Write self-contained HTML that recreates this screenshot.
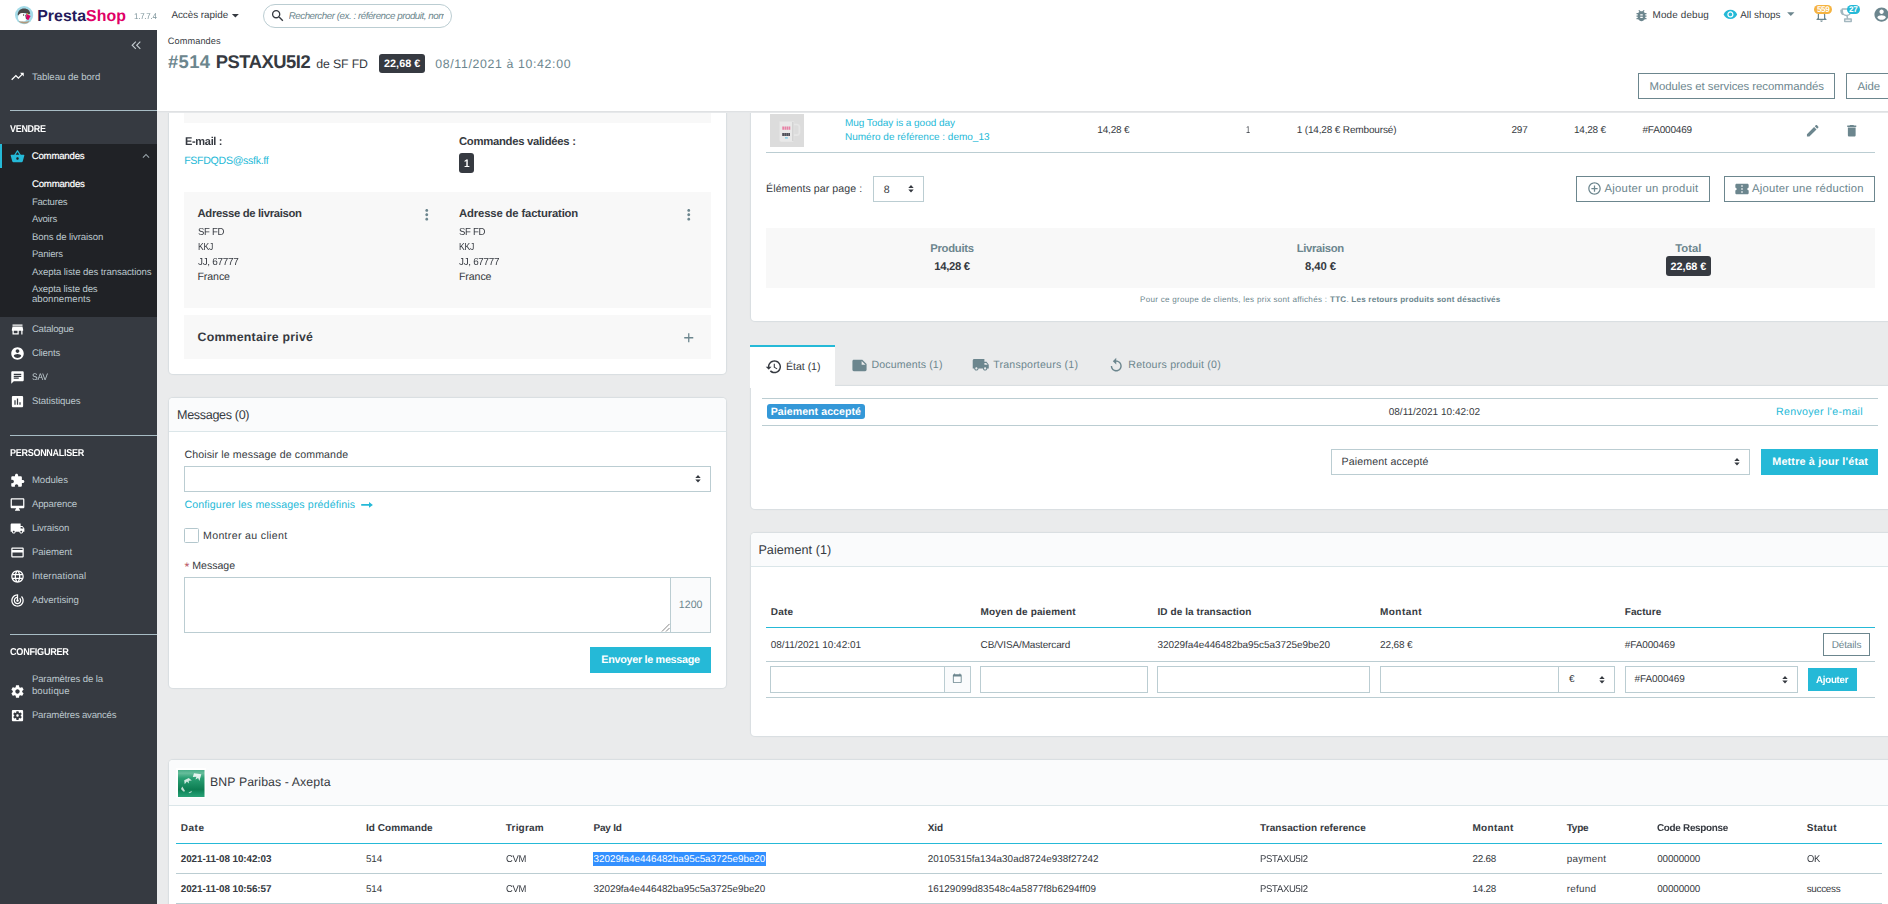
<!DOCTYPE html>
<html lang="fr">
<head>
<meta charset="utf-8">
<title>Commandes • PrestaShop</title>
<style>
*{box-sizing:border-box;margin:0;padding:0}
html,body{width:1888px;height:904px;overflow:hidden;background:#eaebec;font-family:"Liberation Sans",sans-serif;color:#363a41;font-size:11px;text-rendering:geometricPrecision}
.a{position:absolute}
.t{position:absolute;white-space:nowrap}
svg{position:absolute;display:block;overflow:visible}
</style>
</head>
<body>
<!-- main content -->
<div id="main" class="a" style="left:0;top:0;width:1888px;height:904px;overflow:hidden">
<div class="a" style="left:169px;top:80px;width:557px;height:294px;background:#fff;border-radius:4px;box-shadow:0 0 0 1px rgba(187,205,210,.25),0 0 3px rgba(0,0,0,.06)"></div>
<div class="a" style="left:184px;top:100px;width:527px;height:23px;background:#f8f8f8"></div>
<div class="t" style="left:184.5px;top:135px;font-size:11.3px;line-height:14px;height:14px;letter-spacing:-0.34px;transform:scaleX(0.976);transform-origin:0 50%;font-weight:bold">E-mail :</div>
<div class="t" style="left:459px;top:135px;font-size:11.3px;line-height:14px;height:14px;letter-spacing:-0.29px;font-weight:bold">Commandes validées :</div>
<div class="t" style="left:184.2px;top:154px;font-size:10.6px;line-height:14px;height:14px;letter-spacing:-0.31px;color:#25b9d7">FSFDQDS@ssfk.ff</div>
<div class="a" style="left:459px;top:153px;width:15px;height:20px;background:#363a41;border-radius:3px"></div>
<div class="t" style="left:463.7px;top:157px;font-size:10.8px;line-height:14px;height:14px;letter-spacing:-0.32px;transform:scaleX(0.932);transform-origin:0 50%;font-weight:bold;color:#fff">1</div>
<div class="a" style="left:184px;top:192px;width:527px;height:116px;background:#f8f8f8"></div>
<div class="t" style="left:197.5px;top:207px;font-size:11.3px;line-height:14px;height:14px;letter-spacing:-0.32px;font-weight:bold">Adresse de livraison</div>
<div class="t" style="left:459px;top:207px;font-size:11.3px;line-height:14px;height:14px;letter-spacing:-0.15px;font-weight:bold">Adresse de facturation</div>
<svg viewBox="0 0 24 24" style="left:418.45px;top:206.25px;width:17.5px;height:17.5px;fill:#6c868e"><path d="M12 8c1.1 0 2-.9 2-2s-.9-2-2-2-2 .9-2 2 .9 2 2 2zm0 2c-1.1 0-2 .9-2 2s.9 2 2 2 2-.9 2-2-.9-2-2-2zm0 6c-1.1 0-2 .9-2 2s.9 2 2 2 2-.9 2-2-.9-2-2-2z"/></svg>
<svg viewBox="0 0 24 24" style="left:679.65px;top:206.25px;width:17.5px;height:17.5px;fill:#6c868e"><path d="M12 8c1.1 0 2-.9 2-2s-.9-2-2-2-2 .9-2 2 .9 2 2 2zm0 2c-1.1 0-2 .9-2 2s.9 2 2 2 2-.9 2-2-.9-2-2-2zm0 6c-1.1 0-2 .9-2 2s.9 2 2 2 2-.9 2-2-.9-2-2-2z"/></svg>
<div class="t" style="left:197.5px;top:226px;font-size:10.2px;line-height:13px;height:13px;letter-spacing:-0.31px;transform:scaleX(0.938);transform-origin:0 50%">SF FD</div>
<div class="t" style="left:197.5px;top:241px;font-size:10.2px;line-height:13px;height:13px;letter-spacing:-0.31px;transform:scaleX(0.846);transform-origin:0 50%">KKJ</div>
<div class="t" style="left:197.5px;top:256px;font-size:10.2px;line-height:13px;height:13px;letter-spacing:-0.31px;transform:scaleX(0.976);transform-origin:0 50%">JJ, 67777</div>
<div class="t" style="left:197.5px;top:270px;font-size:10.6px;line-height:14px;height:14px;letter-spacing:-0.1px">France</div>
<div class="t" style="left:459px;top:226px;font-size:10.2px;line-height:13px;height:13px;letter-spacing:-0.31px;transform:scaleX(0.942);transform-origin:0 50%">SF FD</div>
<div class="t" style="left:459px;top:241px;font-size:10.2px;line-height:13px;height:13px;letter-spacing:-0.31px;transform:scaleX(0.846);transform-origin:0 50%">KKJ</div>
<div class="t" style="left:459px;top:256px;font-size:10.2px;line-height:13px;height:13px;letter-spacing:-0.31px;transform:scaleX(0.969);transform-origin:0 50%">JJ, 67777</div>
<div class="t" style="left:459px;top:270px;font-size:10.6px;line-height:14px;height:14px;letter-spacing:-0.1px">France</div>
<div class="a" style="left:184px;top:315px;width:527px;height:43.7px;background:#f8f8f8"></div>
<div class="t" style="left:197.5px;top:329px;font-size:12.3px;line-height:16px;height:16px;letter-spacing:0.25px;font-weight:bold">Commentaire privé</div>
<svg viewBox="0 0 24 24" style="left:680.75px;top:330.25px;width:15.5px;height:15.5px;fill:#6c868e"><path d="M19 13h-6v6h-2v-6H5v-2h6V5h2v6h6v2z"/></svg>
<div class="a" style="left:169px;top:398px;width:557px;height:290px;background:#fff;border-radius:4px;box-shadow:0 0 0 1px rgba(187,205,210,.25),0 0 3px rgba(0,0,0,.06)"></div>
<div class="a" style="left:169px;top:398px;width:557px;height:33px;background:#fafbfc;border-radius:4px 4px 0 0"></div>
<div class="a" style="left:169px;top:431px;width:557px;height:1px;background:#dbe6e9"></div>
<div class="t" style="left:177px;top:407px;font-size:12.6px;line-height:16px;height:16px;letter-spacing:-0.34px">Messages (0)</div>
<div class="t" style="left:184.4px;top:448px;font-size:10.6px;line-height:14px;height:14px;letter-spacing:0.12px">Choisir le message de commande</div>
<div class="a" style="left:184px;top:466px;width:527px;height:26px;background:#fff;border:1px solid #bbcdd2"></div>
<svg viewBox="0 0 8 10" style="left:694.7px;top:475.25px;width:6px;height:7.5px;fill:#363a41"><path d="M4 0L7.6 4H.4zM4 10L.4 6h7.2z"/></svg>
<div class="t" style="left:184.4px;top:498px;font-size:10.6px;line-height:14px;height:14px;letter-spacing:0.14px;color:#25b9d7">Configurer les messages prédéfinis</div>
<svg viewBox="360 498 14 14" style="left:360px;top:498px;width:14px;height:14px;fill:#25b9d7"><path d="M361.200 504.100h7.800v-2.100l3.900 2.900-3.900 2.900v-2.100h-7.800z"/></svg>
<div class="a" style="left:184px;top:528px;width:15px;height:15px;background:#fff;border:1px solid #b3c7cd;border-radius:1.500px"></div>
<div class="t" style="left:203px;top:529px;font-size:10.6px;line-height:14px;height:14px;letter-spacing:0.33px">Montrer au client</div>
<div class="t" style="left:184.4px;top:559px;font-size:10.6px;line-height:14px;height:14px;letter-spacing:-0.01px"><span style="color:#b8535f;font-size:12.500px;line-height:0;position:relative;top:1.500px">*</span> Message</div>
<div class="a" style="left:184px;top:577px;width:487px;height:56px;background:#fff;border:1px solid #bbcdd2"></div>
<div class="a" style="left:670px;top:577px;width:41px;height:56px;background:#fafbfc;border:1px solid #bbcdd2"></div>
<svg viewBox="0 0 10 10" style="left:660.500px;top:622.500px;width:9px;height:9px;fill:none;stroke:#6b6b6b;stroke-width:.9"><path d="M9.500 1L1 9.500M9.500 5.500L5.500 9.500"/></svg>
<div class="t" style="left:678.8px;top:598px;font-size:10.6px;line-height:14px;height:14px;letter-spacing:0.04px;color:#6c868e">1200</div>
<div class="a" style="left:590px;top:647px;width:121px;height:26px;background:#25b9d7"></div>
<div class="t" style="left:601.3px;top:653px;font-size:10.8px;line-height:14px;height:14px;letter-spacing:-0.3px;font-weight:bold;color:#fff">Envoyer le message</div>
<div class="a" style="left:751px;top:80px;width:1149px;height:240.5px;background:#fff;border-radius:4px;box-shadow:0 0 0 1px rgba(187,205,210,.25),0 0 3px rgba(0,0,0,.06)"></div>
<svg viewBox="770 114 34 33" style="left:770px;top:114px;width:34px;height:33px">
<defs><filter id="bl"><feGaussianBlur stdDeviation=".45"/></filter></defs>
<rect x="770" y="114" width="34" height="33" fill="#dcdcdc"/>
<g filter="url(#bl)">
<path d="M794 124.500h2.800a2.600 2.600 0 0 1 2.600 2.600v5.500a2.600 2.600 0 0 1-2.600 2.600H794" fill="none" stroke="#e6e6e6" stroke-width="1.700"/>
<path d="M779.500 121.500h14.600v18.500a1.800 1.800 0 0 1-1.800 1.800h-11a1.800 1.800 0 0 1-1.800-1.800z" fill="#e9e9e9"/>
<rect x="792" y="122" width="1.600" height="19" fill="#d3d3d3"/>
<path d="M782.300 128.100h8" stroke="#e8709a" stroke-width="3.400" stroke-dasharray="1.700 .45" opacity=".85" fill="none"/>
<path d="M782.300 134.600h8" stroke="#2e2e38" stroke-width="3" stroke-dasharray="1.600 .4" opacity=".9" fill="none"/>
<rect x="785" y="137" width="2.800" height="1.700" fill="#8fd0e6"/>
</g>
</svg>
<div class="t" style="left:845px;top:117px;font-size:10px;line-height:13px;height:13px;letter-spacing:-0.05px;color:#25b9d7">Mug Today is a good day</div>
<div class="t" style="left:845px;top:131px;font-size:10px;line-height:13px;height:13px;color:#25b9d7">Numéro de référence : demo_13</div>
<div class="t" style="left:1097.3px;top:124px;font-size:10px;line-height:13px;height:13px;letter-spacing:-0.18px">14,28 €</div>
<div class="t" style="left:1245.9px;top:124px;font-size:10px;line-height:13px;height:13px;letter-spacing:-0.3px;transform:scaleX(0.737);transform-origin:0 50%">1</div>
<div class="t" style="left:1296.7px;top:124px;font-size:10px;line-height:13px;height:13px;letter-spacing:-0.15px">1 (14,28 € Remboursé)</div>
<div class="t" style="left:1511.5px;top:124px;font-size:10px;line-height:13px;height:13px;letter-spacing:-0.24px">297</div>
<div class="t" style="left:1574px;top:124px;font-size:10px;line-height:13px;height:13px;letter-spacing:-0.23px">14,28 €</div>
<div class="t" style="left:1642.5px;top:124px;font-size:10px;line-height:13px;height:13px;letter-spacing:-0.19px">#FA000469</div>
<svg viewBox="0 0 24 24" style="left:1804.75px;top:122.75px;width:15.5px;height:15.5px;fill:#6c868e"><path d="M3 17.25V21h3.75L17.81 9.94l-3.75-3.75L3 17.25zM20.71 7.04c.39-.39.39-1.02 0-1.41l-2.34-2.34c-.39-.39-1.02-.39-1.41 0l-1.83 1.83 3.75 3.75 1.83-1.83z"/></svg>
<svg viewBox="0 0 24 24" style="left:1844.25px;top:122.55px;width:15.5px;height:15.5px;fill:#6c868e"><path d="M6 19c0 1.1.9 2 2 2h8c1.1 0 2-.9 2-2V7H6v12zM19 4h-3.5l-1-1h-5l-1 1H5v2h14V4z"/></svg>
<div class="a" style="left:766px;top:152px;width:1109px;height:1px;background:#bbcdd2"></div>
<div class="t" style="left:766.1px;top:182px;font-size:10.6px;line-height:14px;height:14px;letter-spacing:0.07px">Éléments par page :</div>
<div class="a" style="left:873px;top:176px;width:51px;height:26px;background:#fff;border:1px solid #bbcdd2"></div>
<div class="t" style="left:883.7px;top:183px;font-size:10.6px;line-height:14px;height:14px;letter-spacing:-0.3px">8</div>
<svg viewBox="0 0 8 10" style="left:908px;top:185.25px;width:6px;height:7.5px;fill:#363a41"><path d="M4 0L7.6 4H.4zM4 10L.4 6h7.2z"/></svg>
<div class="a" style="left:1576px;top:176px;width:134px;height:26px;background:#fff;border:1px solid #6c868e"></div>
<svg viewBox="0 0 24 24" style="left:1586.5px;top:180.7px;width:15px;height:15px;fill:#6c868e"><path d="M13 7h-2v4H7v2h4v4h2v-4h4v-2h-4V7zm-1-5C6.48 2 2 6.48 2 12s4.48 10 10 10 10-4.48 10-10S17.52 2 12 2zm0 18c-4.41 0-8-3.59-8-8s3.59-8 8-8 8 3.59 8 8-3.59 8-8 8z"/></svg>
<div class="t" style="left:1604.5px;top:182px;font-size:11.3px;line-height:14px;height:14px;letter-spacing:0.26px;color:#6c868e">Ajouter un produit</div>
<div class="a" style="left:1724px;top:176px;width:151px;height:26px;background:#fff;border:1px solid #6c868e"></div>
<svg viewBox="0 0 24 24" style="left:1734px;top:180.5px;width:16px;height:16px;fill:#6c868e"><path d="M22 10V6c0-1.11-.9-2-2-2H4c-1.1 0-1.99.89-1.99 2v4c1.1 0 1.99.9 1.99 2s-.89 2-2 2v4c0 1.1.9 2 2 2h16c1.1 0 2-.9 2-2v-4c-1.1 0-2-.9-2-2s.9-2 2-2zm-9 7.5h-2v-2h2v2zm0-4.5h-2v-2h2v2zm0-4.5h-2v-2h2v2z"/></svg>
<div class="t" style="left:1752px;top:182px;font-size:11.3px;line-height:14px;height:14px;letter-spacing:0.21px;color:#6c868e">Ajouter une réduction</div>
<div class="a" style="left:766px;top:228px;width:1109px;height:59.5px;background:#f8f8f8"></div>
<div class="t" style="left:930.2px;top:242px;font-size:11.3px;line-height:14px;height:14px;letter-spacing:-0.28px;font-weight:bold;color:#6c868e">Produits</div>
<div class="t" style="left:934.2px;top:260px;font-size:11.3px;line-height:14px;height:14px;letter-spacing:-0.3px;font-weight:bold">14,28 €</div>
<div class="t" style="left:1296.7px;top:242px;font-size:11.3px;line-height:14px;height:14px;letter-spacing:-0.33px;font-weight:bold;color:#6c868e">Livraison</div>
<div class="t" style="left:1305px;top:260px;font-size:11.3px;line-height:14px;height:14px;letter-spacing:-0.08px;font-weight:bold">8,40 €</div>
<div class="t" style="left:1675.3px;top:242px;font-size:11.3px;line-height:14px;height:14px;letter-spacing:-0.04px;font-weight:bold;color:#6c868e">Total</div>
<div class="a" style="left:1666px;top:256px;width:45px;height:20px;background:#363a41;border-radius:3px"></div>
<div class="t" style="left:1670.5px;top:260px;font-size:10.8px;line-height:14px;height:14px;letter-spacing:-0.04px;font-weight:bold;color:#fff">22,68 €</div>
<div class="t" style="left:1140px;top:294px;font-size:8.1px;line-height:11px;height:11px;letter-spacing:0.26px;color:#6c868e">Pour ce groupe de clients, les prix sont affichés :</div>
<div class="t" style="left:1330px;top:294px;font-size:8.1px;line-height:11px;height:11px;letter-spacing:0.21px;font-weight:bold;color:#6c868e">TTC<span style="font-weight:normal">.</span> Les retours produits sont désactivés</div>
<div class="a" style="left:751px;top:386px;width:1149px;height:122.5px;background:#fff;border-radius:4px;box-shadow:0 0 0 1px rgba(187,205,210,.25),0 0 3px rgba(0,0,0,.06);border-radius:0 0 4px 4px"></div>
<div class="a" style="left:750px;top:345px;width:85px;height:43px;background:#fff"></div>
<div class="a" style="left:750px;top:345px;width:85px;height:2px;background:#25b9d7"></div>
<svg viewBox="0 0 24 24" style="left:764.95px;top:358.05px;width:17.5px;height:17.5px;fill:#363a41"><path d="M13 3c-4.97 0-9 4.03-9 9H1l3.89 3.89.07.14L9 12H6c0-3.87 3.13-7 7-7s7 3.13 7 7-3.13 7-7 7c-1.93 0-3.68-.79-4.94-2.06l-1.42 1.42C8.27 19.99 10.51 21 13 21c4.97 0 9-4.03 9-9s-4.03-9-9-9zm-1 5v5l4.28 2.54.72-1.21-3.5-2.08V8H12z"/></svg>
<div class="t" style="left:786.1px;top:360px;font-size:10.6px;line-height:14px;height:14px;letter-spacing:-0.05px">État (1)</div>
<svg viewBox="0 0 24 24" style="left:850.5px;top:356.5px;width:17px;height:17px;fill:#6c868e"><path d="M22 10l-6-6H4c-1.1 0-2 .9-2 2v12.01c0 1.1.9 1.99 2 1.99l16-.01c1.1 0 2-.89 2-1.99v-8zm-7-4.5l5.5 5.5H15V5.5z"/></svg>
<div class="t" style="left:871.5px;top:358px;font-size:10.6px;line-height:14px;height:14px;letter-spacing:0.12px;color:#6c868e">Documents (1)</div>
<svg viewBox="0 0 24 24" style="left:972.25px;top:355.85px;width:17.5px;height:17.5px;fill:#6c868e"><path d="M20 8h-3V4H3c-1.1 0-2 .9-2 2v11h2c0 1.66 1.34 3 3 3s3-1.34 3-3h6c0 1.66 1.34 3 3 3s3-1.34 3-3h2v-5l-3-4zM6 18.5c-.83 0-1.5-.67-1.5-1.5s.67-1.5 1.5-1.5 1.5.67 1.5 1.5-.67 1.5-1.5 1.5zm13.5-9l1.96 2.5H17V9.5h2.5zm-1.5 9c-.83 0-1.5-.67-1.5-1.5s.67-1.5 1.5-1.5 1.5.67 1.5 1.5-.67 1.5-1.5 1.5z"/></svg>
<div class="t" style="left:993.2px;top:358px;font-size:10.6px;line-height:14px;height:14px;letter-spacing:0.21px;color:#6c868e">Transporteurs (1)</div>
<svg viewBox="0 0 24 24" style="left:1108.45px;top:356.75px;width:16.5px;height:16.5px;fill:#6c868e"><path d="M12 5V1L7 6l5 5V7c3.31 0 6 2.69 6 6s-2.69 6-6 6-6-2.69-6-6H4c0 4.42 3.58 8 8 8s8-3.58 8-8-3.58-8-8-8z"/></svg>
<div class="t" style="left:1128.3px;top:358px;font-size:10.6px;line-height:14px;height:14px;letter-spacing:0.23px;color:#6c868e">Retours produit (0)</div>
<div class="a" style="left:762px;top:398px;width:1116px;height:1px;background:#bbcdd2"></div>
<div class="a" style="left:762px;top:425px;width:1116px;height:1px;background:#bbcdd2"></div>
<div class="a" style="left:767px;top:404px;width:98px;height:15px;background:#3498d8;border-radius:3px"></div>
<div class="t" style="left:770.7px;top:405px;font-size:10.6px;line-height:14px;height:14px;letter-spacing:0.05px;font-weight:bold;color:#fff">Paiement accepté</div>
<div class="t" style="left:1388.7px;top:406px;font-size:10px;line-height:13px;height:13px;letter-spacing:0.02px">08/11/2021 10:42:02</div>
<div class="t" style="left:1776px;top:405px;font-size:10.6px;line-height:14px;height:14px;letter-spacing:0.32px;color:#25b9d7">Renvoyer l'e-mail</div>
<div class="a" style="left:1331px;top:449px;width:419px;height:26px;background:#fff;border:1px solid #bbcdd2"></div>
<div class="t" style="left:1341.5px;top:455px;font-size:10.6px;line-height:14px;height:14px;letter-spacing:0.14px">Paiement accepté</div>
<svg viewBox="0 0 8 10" style="left:1733.8px;top:458.25px;width:6px;height:7.5px;fill:#363a41"><path d="M4 0L7.6 4H.4zM4 10L.4 6h7.2z"/></svg>
<div class="a" style="left:1761px;top:449px;width:117px;height:26px;background:#25b9d7"></div>
<div class="t" style="left:1772.3px;top:455px;font-size:10.8px;line-height:14px;height:14px;letter-spacing:0.16px;font-weight:bold;color:#fff">Mettre à jour l'état</div>
<div class="a" style="left:751px;top:533px;width:1149px;height:202.5px;background:#fff;border-radius:4px;box-shadow:0 0 0 1px rgba(187,205,210,.25),0 0 3px rgba(0,0,0,.06)"></div>
<div class="a" style="left:751px;top:533px;width:1149px;height:33px;background:#fafbfc;border-radius:4px 0 0 0"></div>
<div class="a" style="left:751px;top:566px;width:1149px;height:1px;background:#dbe6e9"></div>
<div class="t" style="left:758.4px;top:542px;font-size:12.6px;line-height:16px;height:16px;letter-spacing:0.06px">Paiement (1)</div>
<div class="t" style="left:770.7px;top:606px;font-size:10px;line-height:13px;height:13px;letter-spacing:0.24px;font-weight:bold">Date</div>
<div class="t" style="left:980.6px;top:606px;font-size:10px;line-height:13px;height:13px;letter-spacing:0.13px;font-weight:bold">Moyen de paiement</div>
<div class="t" style="left:1157.5px;top:606px;font-size:10px;line-height:13px;height:13px;letter-spacing:0.08px;font-weight:bold">ID de la transaction</div>
<div class="t" style="left:1380.1px;top:606px;font-size:10px;line-height:13px;height:13px;letter-spacing:0.42px;font-weight:bold">Montant</div>
<div class="t" style="left:1624.8px;top:606px;font-size:10px;line-height:13px;height:13px;letter-spacing:0.05px;font-weight:bold">Facture</div>
<div class="a" style="left:766px;top:627px;width:1109px;height:1px;background:#25b9d7"></div>
<div class="t" style="left:770.7px;top:639px;font-size:10px;line-height:13px;height:13px;letter-spacing:-0.04px">08/11/2021 10:42:01</div>
<div class="t" style="left:980.6px;top:639px;font-size:10px;line-height:13px;height:13px;letter-spacing:-0.15px">CB/VISA/Mastercard</div>
<div class="t" style="left:1157.5px;top:639px;font-size:10px;line-height:13px;height:13px;letter-spacing:-0.07px">32029fa4e446482ba95c5a3725e9be20</div>
<div class="t" style="left:1380.1px;top:639px;font-size:10px;line-height:13px;height:13px;letter-spacing:-0.14px">22,68 €</div>
<div class="t" style="left:1624.8px;top:639px;font-size:10px;line-height:13px;height:13px;letter-spacing:-0.12px">#FA000469</div>
<div class="a" style="left:1823px;top:633px;width:47px;height:23px;background:#fff;border:1px solid #6c868e"></div>
<div class="t" style="left:1831.7px;top:639px;font-size:10px;line-height:13px;height:13px;letter-spacing:-0.14px;color:#6c868e">Détails</div>
<div class="a" style="left:766px;top:661px;width:1109px;height:1px;background:#bbcdd2"></div>
<div class="a" style="left:770px;top:666px;width:174.5px;height:26.6px;background:#fff;border:1px solid #bbcdd2"></div>
<div class="a" style="left:943.5px;top:666px;width:27.5px;height:26.6px;background:#fafbfc;border:1px solid #bbcdd2"></div>
<svg viewBox="0 0 24 24" style="left:951.95px;top:673.45px;width:10.5px;height:10.5px;fill:#6c868e"><path d="M20 3h-1V1h-2v2H7V1H5v2H4c-1.1 0-2 .9-2 2v16c0 1.1.9 2 2 2h16c1.1 0 2-.9 2-2V5c0-1.1-.9-2-2-2zm0 18H4V8h16v13z"/></svg>
<div class="a" style="left:980px;top:666px;width:168px;height:26.6px;background:#fff;border:1px solid #bbcdd2"></div>
<div class="a" style="left:1157px;top:666px;width:213px;height:26.6px;background:#fff;border:1px solid #bbcdd2"></div>
<div class="a" style="left:1380px;top:666px;width:179px;height:26.6px;background:#fff;border:1px solid #bbcdd2"></div>
<div class="a" style="left:1558px;top:666px;width:57px;height:26.6px;background:#fff;border:1px solid #bbcdd2"></div>
<div class="t" style="left:1569px;top:673px;font-size:10px;line-height:13px;height:13px;letter-spacing:0.44px">€</div>
<svg viewBox="0 0 8 10" style="left:1598.8px;top:675.75px;width:6px;height:7.5px;fill:#363a41"><path d="M4 0L7.6 4H.4zM4 10L.4 6h7.2z"/></svg>
<div class="a" style="left:1625px;top:666px;width:173px;height:26.6px;background:#fff;border:1px solid #bbcdd2"></div>
<div class="t" style="left:1634.6px;top:673px;font-size:10px;line-height:13px;height:13px;letter-spacing:-0.12px">#FA000469</div>
<svg viewBox="0 0 8 10" style="left:1781.9px;top:675.75px;width:6px;height:7.5px;fill:#363a41"><path d="M4 0L7.6 4H.4zM4 10L.4 6h7.2z"/></svg>
<div class="a" style="left:1808px;top:668px;width:49px;height:22.5px;background:#25b9d7"></div>
<div class="t" style="left:1816.1px;top:674px;font-size:10px;line-height:13px;height:13px;letter-spacing:-0.3px;transform:scaleX(0.979);transform-origin:0 50%;font-weight:bold;color:#fff">Ajouter</div>
<div class="a" style="left:766px;top:697px;width:1109px;height:1px;background:#bbcdd2"></div>
<div class="a" style="left:169px;top:760px;width:1731px;height:160px;background:#fff;border-radius:4px;box-shadow:0 0 0 1px rgba(187,205,210,.25),0 0 3px rgba(0,0,0,.06)"></div>
<div class="a" style="left:169px;top:760px;width:1731px;height:45px;background:#fafbfc;border-radius:4px 0 0 0"></div>
<div class="a" style="left:169px;top:805px;width:1731px;height:1px;background:#dbe6e9"></div>
<div class="a" style="left:176px;top:768px;width:30px;height:30px;background:#fff"></div>
<svg viewBox="178 769.500 26.500 27" style="left:178px;top:769.500px;width:26.500px;height:27px">
<defs><linearGradient id="bnp" x1="0" y1="0" x2="0" y2="1"><stop offset="0" stop-color="#48ad87"/><stop offset=".12" stop-color="#66bd9b"/><stop offset=".3" stop-color="#2a9f73"/><stop offset=".72" stop-color="#0d7d52"/><stop offset=".85" stop-color="#179165"/><stop offset="1" stop-color="#2aa277"/></linearGradient>
<filter id="bb"><feGaussianBlur stdDeviation=".35"/></filter></defs>
<rect x="178" y="769.500" width="26.500" height="27" fill="url(#bnp)"/>
<g fill="#fff" filter="url(#bb)">
<path d="M194 772.800l7.300 1-1.900 6.600-1.300-3-2.600 1.700.9-2.900-3.600.4z" opacity=".85"/>
<path d="M184.200 779.800l4.600-2.300 3 2.400-3.100.4.200 2.700-2-1.900-2.200 2.600z" opacity=".8"/>
<path d="M181 788.500l1.300-2.500 2.300 3.700-.300 1.700-1.500-1z" opacity=".75"/>
<path d="M188.600 791.900l3.500-1.700-.9 1.900-2.200.6z" opacity=".7"/>
</g>
</svg>
<div class="t" style="left:210px;top:774px;font-size:12.3px;line-height:16px;height:16px;letter-spacing:0.1px">BNP Paribas - Axepta</div>
<div class="t" style="left:180.8px;top:822px;font-size:10px;line-height:13px;height:13px;letter-spacing:0.51px;font-weight:bold">Date</div>
<div class="t" style="left:365.9px;top:822px;font-size:10px;line-height:13px;height:13px;letter-spacing:0.06px;font-weight:bold">Id Commande</div>
<div class="t" style="left:505.8px;top:822px;font-size:10px;line-height:13px;height:13px;letter-spacing:0.2px;font-weight:bold">Trigram</div>
<div class="t" style="left:593.5px;top:822px;font-size:10px;line-height:13px;height:13px;letter-spacing:-0.21px;font-weight:bold">Pay Id</div>
<div class="t" style="left:927.7px;top:822px;font-size:10px;line-height:13px;height:13px;letter-spacing:-0.03px;font-weight:bold">Xid</div>
<div class="t" style="left:1260px;top:822px;font-size:10px;line-height:13px;height:13px;letter-spacing:0.09px;font-weight:bold">Transaction reference</div>
<div class="t" style="left:1472.4px;top:822px;font-size:10px;line-height:13px;height:13px;letter-spacing:0.34px;font-weight:bold">Montant</div>
<div class="t" style="left:1566.7px;top:822px;font-size:10px;line-height:13px;height:13px;letter-spacing:-0.2px;font-weight:bold">Type</div>
<div class="t" style="left:1657.2px;top:822px;font-size:10px;line-height:13px;height:13px;letter-spacing:-0.3px;transform:scaleX(0.991);transform-origin:0 50%;font-weight:bold">Code Response</div>
<div class="t" style="left:1806.7px;top:822px;font-size:10px;line-height:13px;height:13px;letter-spacing:0.29px;font-weight:bold">Statut</div>
<div class="a" style="left:176px;top:843px;width:1706px;height:1px;background:#25b9d7"></div>
<div class="t" style="left:180.8px;top:853px;font-size:9.9px;line-height:13px;height:13px;letter-spacing:-0.09px;font-weight:bold">2021-11-08 10:42:03</div>
<div class="t" style="left:365.9px;top:853px;font-size:9.9px;line-height:13px;height:13px;letter-spacing:-0.06px">514</div>
<div class="t" style="left:505.8px;top:853px;font-size:9.9px;line-height:13px;height:13px;letter-spacing:-0.3px;transform:scaleX(0.958);transform-origin:0 50%">CVM</div>
<div class="a" style="left:593px;top:851.5px;width:173px;height:14px;background:#3390ff"></div>
<div class="t" style="left:593.5px;top:853px;font-size:9.9px;line-height:13px;height:13px;letter-spacing:-0.02px;color:#fff">32029fa4e446482ba95c5a3725e9be20</div>
<div class="t" style="left:927.7px;top:853px;font-size:9.9px;line-height:13px;height:13px;letter-spacing:0.02px">20105315fa134a30ad8724e938f27242</div>
<div class="t" style="left:1260px;top:853px;font-size:9.9px;line-height:13px;height:13px;letter-spacing:-0.3px;transform:scaleX(0.961);transform-origin:0 50%">PSTAXU5I2</div>
<div class="t" style="left:1472.4px;top:853px;font-size:9.9px;line-height:13px;height:13px;letter-spacing:-0.22px">22.68</div>
<div class="t" style="left:1566.7px;top:853px;font-size:9.9px;line-height:13px;height:13px;letter-spacing:0.25px">payment</div>
<div class="t" style="left:1657.2px;top:853px;font-size:9.9px;line-height:13px;height:13px;letter-spacing:-0.11px">00000000</div>
<div class="t" style="left:1806.7px;top:853px;font-size:9.9px;line-height:13px;height:13px;letter-spacing:-0.3px;transform:scaleX(0.950);transform-origin:0 50%">OK</div>
<div class="t" style="left:180.8px;top:883px;font-size:9.9px;line-height:13px;height:13px;letter-spacing:-0.09px;font-weight:bold">2021-11-08 10:56:57</div>
<div class="t" style="left:365.9px;top:883px;font-size:9.9px;line-height:13px;height:13px;letter-spacing:-0.06px">514</div>
<div class="t" style="left:505.8px;top:883px;font-size:9.9px;line-height:13px;height:13px;letter-spacing:-0.3px;transform:scaleX(0.958);transform-origin:0 50%">CVM</div>
<div class="t" style="left:593.5px;top:883px;font-size:9.9px;line-height:13px;height:13px;letter-spacing:-0.02px">32029fa4e446482ba95c5a3725e9be20</div>
<div class="t" style="left:927.7px;top:883px;font-size:9.9px;line-height:13px;height:13px;letter-spacing:0.05px">16129099d83548c4a5877f8b6294ff09</div>
<div class="t" style="left:1260px;top:883px;font-size:9.9px;line-height:13px;height:13px;letter-spacing:-0.3px;transform:scaleX(0.961);transform-origin:0 50%">PSTAXU5I2</div>
<div class="t" style="left:1472.4px;top:883px;font-size:9.9px;line-height:13px;height:13px;letter-spacing:-0.22px">14.28</div>
<div class="t" style="left:1566.7px;top:883px;font-size:9.9px;line-height:13px;height:13px;letter-spacing:0.27px">refund</div>
<div class="t" style="left:1657.2px;top:883px;font-size:9.9px;line-height:13px;height:13px;letter-spacing:-0.11px">00000000</div>
<div class="t" style="left:1806.7px;top:883px;font-size:9.9px;line-height:13px;height:13px;letter-spacing:-0.29px">success</div>
<div class="a" style="left:176px;top:873px;width:1706px;height:1px;background:#bbcdd2"></div>
<div class="a" style="left:176px;top:903px;width:1706px;height:1px;background:#bbcdd2"></div>
</div>
<!-- page title bar -->
<div id="titlebar">
<div class="a" style="left:157px;top:30px;width:1731px;height:81px;background:#fff"></div>
<div class="a" style="left:157px;top:111px;width:1731px;height:1px;background:#dfe1e3"></div>
<div class="a" style="left:157px;top:112px;width:1731px;height:1px;background:#e6e8ea"></div>
<div class="t" style="left:167.8px;top:35px;font-size:9.2px;line-height:12px;height:12px;letter-spacing:0.09px">Commandes</div>
<div class="t" style="left:168px;top:50px;font-size:18.4px;line-height:23px;height:23px;letter-spacing:0.39px;font-weight:bold;color:#6c868e">#514</div>
<div class="t" style="left:215.7px;top:50px;font-size:18.4px;line-height:23px;height:23px;letter-spacing:-0.47px;font-weight:bold">PSTAXU5I2</div>
<div class="t" style="left:316.3px;top:56px;font-size:12.3px;line-height:16px;height:16px;letter-spacing:-0.13px">de SF FD</div>
<div class="a" style="left:379px;top:54px;width:46px;height:19px;background:#363a41;border-radius:3px"></div>
<div class="t" style="left:384px;top:57px;font-size:10.8px;line-height:14px;height:14px;letter-spacing:0.04px;font-weight:bold;color:#fff">22,68 €</div>
<div class="t" style="left:435.3px;top:56px;font-size:12.3px;line-height:16px;height:16px;letter-spacing:0.65px;color:#6c868e">08/11/2021 à 10:42:00</div>
<div class="a" style="left:1638px;top:73px;width:197px;height:26px;border:1px solid #6c868e;background:#fff"></div>
<div class="t" style="left:1649.5px;top:80px;font-size:11.4px;line-height:14px;height:14px;letter-spacing:-0.05px;color:#6c868e">Modules et services recommandés</div>
<div class="a" style="left:1846px;top:73px;width:54px;height:26px;border:1px solid #6c868e;background:#fff"></div>
<div class="t" style="left:1857.4px;top:80px;font-size:11.4px;line-height:14px;height:14px;letter-spacing:-0.07px;color:#6c868e">Aide</div>
</div>
<!-- top header -->
<div id="header">
<div class="a" style="left:0px;top:0px;width:1888px;height:30px;background:#fff"></div>
<svg viewBox="0 0 36 36" style="left:15px;top:5.500px;width:18.200px;height:18.200px">
<circle cx="18" cy="18" r="18" fill="#a4dbe8"/>
<path d="M5.300 18.500C5 10 11 5 18 5c7.200 0 12 4.200 12 10.500l-5.500 1C22 12.500 13.500 12.800 11 20z" fill="#4a4a4a"/>
<path d="M6 23c0-6 4-9.300 9-9 4 .3 7.200 2 7.600 5l-.4 8.500c-2 3.300-10 3.800-13.700 2C6.600 27.800 6 25.500 6 23z" fill="#fff"/>
<path d="M22.300 15.300l8.600 4.300-4.700 8.400-4.200-3z" fill="#df0067"/>
<path d="M22.300 15.300l3-.9 2.400 3.600z" fill="#fbbb22"/>
<path d="M20.500 17.500l2 8" stroke="#333" stroke-width="1.300" fill="none"/>
<circle cx="17" cy="17.800" r="1.300" fill="#333"/>
<path d="M7.300 29.300c4.500 2.400 17 2.400 21.500-.3-1.500 4-5.500 5.800-10.800 5.800s-9.200-2-10.700-5.500z" fill="#b3987c"/>
</svg>
<div class="t" style="left:37.2px;top:7px;font-size:15.9px;line-height:19px;height:19px;letter-spacing:0.05px;font-weight:bold"><span style="color:#251b5b">Presta</span><span style="color:#df0067">Shop</span></div>
<div class="t" style="left:134.4px;top:10px;font-size:8.4px;line-height:12px;height:12px;letter-spacing:-0.25px;transform:scaleX(0.951);transform-origin:0 50%;color:#7d949b">1.7.7.4</div>
<div class="t" style="left:171.4px;top:9px;font-size:9.9px;line-height:13px;height:13px;letter-spacing:-0.03px">Accès rapide</div>
<svg viewBox="0 0 24 24" style="left:227.1px;top:7px;width:16.8px;height:16.8px;fill:#363a41"><path d="M7 10l5 5 5-5z"/></svg>
<div class="a" style="left:263px;top:4px;width:189px;height:24px;border:1px solid #bbcdd2;border-radius:12px;background:#fff"></div>
<svg viewBox="0 0 24 24" style="left:269.7px;top:8.3px;width:15.6px;height:15.6px;fill:#363a41"><path d="M15.5 14h-.79l-.28-.27C15.41 12.59 16 11.11 16 9.5 16 5.91 13.09 3 9.5 3S3 5.91 3 9.5 5.91 16 9.5 16c1.61 0 3.09-.59 4.23-1.57l.27.28v.79l5 4.99L20.49 19l-4.99-5zm-6 0C7.01 14 5 11.99 5 9.5S7.01 5 9.5 5 14 7.01 14 9.5 11.99 14 9.5 14z"/></svg>
<div class="t" style="left:288.7px;top:10px;font-size:9.75px;line-height:13px;height:13px;letter-spacing:-0.46px;font-style:italic;color:#6c868e;width:155.300px;overflow:hidden">Rechercher (ex. : référence produit, nom</div>
<svg viewBox="0 0 24 24" style="left:1633.6px;top:8.1px;width:15px;height:15px;fill:#6c868e"><path d="M20 8h-2.81c-.45-.78-1.07-1.45-1.82-1.96L17 4.41 15.59 3l-2.17 2.17C12.96 5.06 12.49 5 12 5c-.49 0-.96.06-1.41.17L8.41 3 7 4.41l1.62 1.63C7.88 6.55 7.26 7.22 6.81 8H4v2h2.09c-.05.33-.09.66-.09 1v1H4v2h2v1c0 .34.04.67.09 1H4v2h2.81c1.04 1.79 2.97 3 5.19 3s4.15-1.21 5.19-3H20v-2h-2.09c.05-.33.09-.66.09-1v-1h2v-2h-2v-1c0-.34-.04-.67-.09-1H20V8zm-6 8h-4v-2h4v2zm0-4h-4v-2h4v2z"/></svg>
<div class="t" style="left:1652.6px;top:9px;font-size:9.9px;line-height:13px;height:13px;letter-spacing:0.15px">Mode debug</div>
<svg viewBox="0 0 24 24" style="left:1722.7px;top:7.3px;width:14.8px;height:14.8px;fill:#25b9d7"><path d="M12 4.5C7 4.5 2.73 7.61 1 12c1.73 4.39 6 7.5 11 7.5s9.27-3.11 11-7.5c-1.73-4.39-6-7.5-11-7.5zM12 17c-2.76 0-5-2.24-5-5s2.24-5 5-5 5 2.24 5 5-2.24 5-5 5zm0-8c-1.66 0-3 1.34-3 3s1.34 3 3 3 3-1.34 3-3-1.34-3-3-3z"/></svg>
<div class="t" style="left:1740.2px;top:9px;font-size:9.9px;line-height:13px;height:13px;letter-spacing:0.03px">All shops</div>
<svg viewBox="0 0 24 24" style="left:1782px;top:5px;width:17.6px;height:17.6px;fill:#6c868e"><path d="M7 10l5 5 5-5z"/></svg>
<svg viewBox="0 0 24 24" style="left:1813.7px;top:7.85px;width:15px;height:15px;fill:#6c868e"><path d="M12 22c1.1 0 2-.9 2-2h-4c0 1.1.89 2 2 2zm6-6v-5c0-3.07-1.64-5.64-4.5-6.32V4c0-.83-.67-1.5-1.5-1.5s-1.5.67-1.5 1.5v.68C7.63 5.36 6 7.92 6 11v5l-2 2v1h16v-1l-2-2zm-2 1H8v-6c0-2.48 1.51-4.5 4-4.5s4 2.02 4 4.5v6z"/></svg>
<div class="a" style="left:1814.3px;top:5.3px;width:18.1px;height:9px;border-radius:4.500px;background:#f5b340;color:#fff;font-weight:bold;font-size:8.200px;line-height:9.400px;text-align:center;letter-spacing:-.45px;text-indent:-.4px">559</div>
<svg viewBox="1838 6 18 18" style="left:1838px;top:6px;width:18px;height:18px;fill:none;stroke:#a3b7bf;stroke-width:1.500;stroke-linejoin:round"><path d="M1842.300 9h8.500v2.300a4.250 4.250 0 0 1-8.500 0zM1842.300 10.200h-1.300c0 2.600 1 3.900 2.400 4.300M1847 15.600l.6 3.200M1844.700 18.900h6.500v2.700h-6.500z"/></svg>
<div class="a" style="left:1846.6px;top:5.3px;width:13.5px;height:9px;border-radius:4.500px;background:#25b9d7;color:#fff;font-weight:bold;font-size:8.200px;line-height:9.400px;text-align:center;letter-spacing:-.35px;text-indent:-.3px">27</div>
<svg viewBox="0 0 24 24" style="left:1872.8px;top:6.3px;width:17.2px;height:17.2px;fill:#6c868e"><path d="M12 2C6.48 2 2 6.48 2 12s4.48 10 10 10 10-4.48 10-10S17.52 2 12 2zm0 3c1.66 0 3 1.34 3 3s-1.34 3-3 3-3-1.34-3-3 1.34-3 3-3zm0 14.2c-2.5 0-4.71-1.28-6-3.22.03-1.99 4-3.08 6-3.08 1.99 0 5.97 1.09 6 3.08-1.29 1.94-3.5 3.22-6 3.22z"/></svg>
</div>
<!-- sidebar -->
<div id="sidebar">
<div class="a" style="left:0px;top:30px;width:157px;height:874px;background:#363a41"></div>
<div class="a" style="left:0px;top:144px;width:157px;height:173px;background:#202226"></div>
<div class="a" style="left:0px;top:144px;width:2px;height:24px;background:#25b9d7"></div>
<svg viewBox="0 0 12 10" style="left:130.500px;top:40.500px;width:10.500px;height:8.500px;fill:none;stroke:#c3cbd0;stroke-width:1.300"><path d="M5.500 .8L1.200 5l4.300 4.200M10.800 .8L6.500 5l4.300 4.200"/></svg>
<svg viewBox="0 0 24 24" style="left:9.8px;top:69.3px;width:15px;height:15px;fill:#fff"><path d="M16 6l2.29 2.29-4.88 4.88-4-4L2 16.59 3.41 18l6-6 4 4 6.3-6.29L22 12V6z"/></svg>
<div class="t" style="left:31.9px;top:71px;font-size:9.6px;line-height:13px;height:13px;letter-spacing:-0.03px;color:#bcc7cd">Tableau de bord</div>
<div class="a" style="left:10px;top:110px;width:147px;height:1px;background:#a8bcc4"></div>
<div class="t" style="left:10px;top:123px;font-size:10px;line-height:13px;height:13px;letter-spacing:-0.3px;transform:scaleX(0.896);transform-origin:0 50%;font-weight:bold;color:#fff">VENDRE</div>
<svg viewBox="0 0 24 24" style="left:9.8px;top:148.5px;width:15px;height:15px;fill:#25b9d7"><path d="M17.21 9l-4.38-6.56c-.19-.28-.51-.42-.83-.42-.32 0-.64.14-.83.43L6.79 9H2c-.55 0-1 .45-1 1 0 .09.01.18.04.27l2.54 9.27c.23.84 1 1.46 1.92 1.46h13c.92 0 1.69-.62 1.93-1.46l2.54-9.27L23 10c0-.55-.45-1-1-1h-4.79zM9 9l3-4.4L15 9H9zm3 8c-1.1 0-2-.9-2-2s.9-2 2-2 2 .9 2 2-.9 2-2 2z"/></svg>
<div class="t" style="left:31.7px;top:150px;font-size:9.6px;line-height:13px;height:13px;letter-spacing:-0.18px;color:#fff;-webkit-text-stroke:.2px #fff">Commandes</div>
<svg viewBox="0 0 24 24" style="left:138.5px;top:149.2px;width:14px;height:14px;fill:#97a2a8"><path d="M7.41 15.41L12 10.83l4.59 4.58L18 14l-6-6-6 6z"/></svg>
<div class="t" style="left:31.9px;top:178px;font-size:9.6px;line-height:13px;height:13px;letter-spacing:-0.17px;color:#fff;-webkit-text-stroke:.2px #fff">Commandes</div>
<div class="t" style="left:31.9px;top:196px;font-size:9.6px;line-height:13px;height:13px;letter-spacing:-0.24px;color:#bcc7cd">Factures</div>
<div class="t" style="left:31.9px;top:213px;font-size:9.6px;line-height:13px;height:13px;letter-spacing:-0.22px;color:#bcc7cd">Avoirs</div>
<div class="t" style="left:31.9px;top:231px;font-size:9.6px;line-height:13px;height:13px;letter-spacing:-0.1px;color:#bcc7cd">Bons de livraison</div>
<div class="t" style="left:31.9px;top:248px;font-size:9.6px;line-height:13px;height:13px;letter-spacing:-0.24px;color:#bcc7cd">Paniers</div>
<div class="t" style="left:31.9px;top:266px;font-size:9.6px;line-height:13px;height:13px;letter-spacing:-0.09px;color:#bcc7cd">Axepta liste des transactions</div>
<div class="t" style="left:31.9px;top:283px;font-size:9.6px;line-height:13px;height:13px;letter-spacing:-0.13px;color:#bcc7cd">Axepta liste des</div>
<div class="t" style="left:31.9px;top:293px;font-size:9.6px;line-height:13px;height:13px;letter-spacing:0.05px;color:#bcc7cd">abonnements</div>
<svg viewBox="0 0 24 24" style="left:9.8px;top:321.7px;width:15px;height:15px;fill:#fff"><path d="M20 4H4v2h16V4zm1 10v-2l-1-5H4l-1 5v2h1v6h10v-6h4v6h2v-6h1zm-9 4H6v-4h6v4z"/></svg>
<div class="t" style="left:31.9px;top:323px;font-size:9.6px;line-height:13px;height:13px;letter-spacing:-0.21px;color:#bcc7cd">Catalogue</div>
<svg viewBox="0 0 24 24" style="left:9.8px;top:345.7px;width:15px;height:15px;fill:#fff"><path d="M12 2C6.48 2 2 6.48 2 12s4.48 10 10 10 10-4.48 10-10S17.52 2 12 2zm0 3c1.66 0 3 1.34 3 3s-1.34 3-3 3-3-1.34-3-3 1.34-3 3-3zm0 14.2c-2.5 0-4.71-1.28-6-3.22.03-1.99 4-3.08 6-3.08 1.99 0 5.97 1.09 6 3.08-1.29 1.94-3.5 3.22-6 3.22z"/></svg>
<div class="t" style="left:31.9px;top:347px;font-size:9.6px;line-height:13px;height:13px;letter-spacing:-0.17px;color:#bcc7cd">Clients</div>
<svg viewBox="0 0 24 24" style="left:9.8px;top:369.5px;width:15px;height:15px;fill:#fff"><path d="M20 2H4c-1.1 0-1.99.9-1.99 2L2 22l4-4h14c1.1 0 2-.9 2-2V4c0-1.1-.9-2-2-2zM6 9h12v2H6V9zm8 5H6v-2h8v2zm4-6H6V6h12v2z"/></svg>
<div class="t" style="left:31.9px;top:371px;font-size:9.6px;line-height:13px;height:13px;letter-spacing:-0.29px;transform:scaleX(0.887);transform-origin:0 50%;color:#bcc7cd">SAV</div>
<svg viewBox="0 0 24 24" style="left:9.8px;top:393.5px;width:15px;height:15px;fill:#fff"><path d="M19 3H5c-1.1 0-2 .9-2 2v14c0 1.1.9 2 2 2h14c1.1 0 2-.9 2-2V5c0-1.1-.9-2-2-2zM9 17H7v-7h2v7zm4 0h-2V7h2v10zm4 0h-2v-4h2v4z"/></svg>
<div class="t" style="left:31.9px;top:395px;font-size:9.6px;line-height:13px;height:13px;letter-spacing:-0.08px;color:#bcc7cd">Statistiques</div>
<div class="a" style="left:10px;top:435px;width:147px;height:1px;background:#a8bcc4"></div>
<div class="t" style="left:10px;top:447px;font-size:10px;line-height:13px;height:13px;letter-spacing:-0.3px;transform:scaleX(0.899);transform-origin:0 50%;font-weight:bold;color:#fff">PERSONNALISER</div>
<svg viewBox="0 0 24 24" style="left:9.8px;top:472.5px;width:15px;height:15px;fill:#fff"><path d="M20.5 11H19V7c0-1.1-.9-2-2-2h-4V3.5C13 2.12 11.88 1 10.5 1S8 2.12 8 3.5V5H4c-1.1 0-1.99.9-1.99 2v3.8H3.5c1.49 0 2.7 1.21 2.7 2.7s-1.21 2.7-2.7 2.7H2V20c0 1.1.9 2 2 2h3.8v-1.5c0-1.49 1.21-2.7 2.7-2.7 1.49 0 2.7 1.21 2.7 2.7V22H17c1.1 0 2-.9 2-2v-4h1.5c1.38 0 2.5-1.12 2.5-2.5S21.88 11 20.5 11z"/></svg>
<div class="t" style="left:31.9px;top:474px;font-size:9.6px;line-height:13px;height:13px;letter-spacing:-0.03px;color:#bcc7cd">Modules</div>
<svg viewBox="0 0 24 24" style="left:9.8px;top:496.9px;width:15px;height:15px;fill:#fff"><path d="M21 2H3c-1.1 0-2 .9-2 2v12c0 1.1.9 2 2 2h7l-2 3v1h8v-1l-2-3h7c1.1 0 2-.9 2-2V4c0-1.1-.9-2-2-2zm0 12H3V4h18v10z"/></svg>
<div class="t" style="left:31.9px;top:498px;font-size:9.6px;line-height:13px;height:13px;letter-spacing:-0.14px;color:#bcc7cd">Apparence</div>
<svg viewBox="0 0 24 24" style="left:9.8px;top:520.6px;width:15px;height:15px;fill:#fff"><path d="M20 8h-3V4H3c-1.1 0-2 .9-2 2v11h2c0 1.66 1.34 3 3 3s3-1.34 3-3h6c0 1.66 1.34 3 3 3s3-1.34 3-3h2v-5l-3-4zM6 18.5c-.83 0-1.5-.67-1.5-1.5s.67-1.5 1.5-1.5 1.5.67 1.5 1.5-.67 1.5-1.5 1.5zm13.5-9l1.96 2.5H17V9.5h2.5zm-1.5 9c-.83 0-1.5-.67-1.5-1.5s.67-1.5 1.5-1.5 1.5.67 1.5 1.5-.67 1.5-1.5 1.5z"/></svg>
<div class="t" style="left:31.9px;top:522px;font-size:9.6px;line-height:13px;height:13px;letter-spacing:-0.12px;color:#bcc7cd">Livraison</div>
<svg viewBox="0 0 24 24" style="left:9.8px;top:544.7px;width:15px;height:15px;fill:#fff"><path d="M20 4H4c-1.11 0-1.99.89-1.99 2L2 18c0 1.11.89 2 2 2h16c1.11 0 2-.89 2-2V6c0-1.11-.89-2-2-2zm0 14H4v-6h16v6zm0-10H4V6h16v2z"/></svg>
<div class="t" style="left:31.9px;top:546px;font-size:9.6px;line-height:13px;height:13px;letter-spacing:-0.04px;color:#bcc7cd">Paiement</div>
<svg viewBox="0 0 24 24" style="left:9.8px;top:568.8px;width:15px;height:15px;fill:#fff"><path d="M11.99 2C6.47 2 2 6.48 2 12s4.47 10 9.99 10C17.52 22 22 17.52 22 12S17.52 2 11.99 2zm6.93 6h-2.95c-.32-1.25-.78-2.45-1.38-3.56 1.84.63 3.37 1.91 4.33 3.56zM12 4.04c.83 1.2 1.48 2.53 1.91 3.96h-3.82c.43-1.43 1.08-2.76 1.91-3.96zM4.26 14C4.1 13.36 4 12.69 4 12s.1-1.36.26-2h3.38c-.08.66-.14 1.32-.14 2 0 .68.06 1.34.14 2H4.26zm.82 2h2.95c.32 1.25.78 2.45 1.38 3.56-1.84-.63-3.37-1.9-4.33-3.56zm2.95-8H5.08c.96-1.66 2.49-2.93 4.33-3.56C8.81 5.55 8.35 6.75 8.03 8zM12 19.96c-.83-1.2-1.48-2.53-1.91-3.96h3.82c-.43 1.43-1.08 2.76-1.91 3.96zM14.34 14H9.66c-.09-.66-.16-1.32-.16-2 0-.68.07-1.35.16-2h4.68c.09.65.16 1.32.16 2 0 .68-.07 1.34-.16 2zm.25 5.56c.6-1.11 1.06-2.31 1.38-3.56h2.95c-.96 1.65-2.49 2.93-4.33 3.56zM16.36 14c.08-.66.14-1.32.14-2 0-.68-.06-1.34-.14-2h3.38c.16.64.26 1.31.26 2s-.1 1.36-.26 2h-3.38z"/></svg>
<div class="t" style="left:31.9px;top:570px;font-size:9.6px;line-height:13px;height:13px;letter-spacing:0.11px;color:#bcc7cd">International</div>
<svg viewBox="0 0 24 24" style="left:9.8px;top:592.5px;width:15px;height:15px;fill:#fff"><path d="M19.07 4.93l-1.41 1.41C19.1 7.79 20 9.79 20 12c0 4.42-3.58 8-8 8s-8-3.58-8-8c0-4.08 3.05-7.44 7-7.93v2.02C8.16 6.57 6 9.03 6 12c0 3.31 2.69 6 6 6s6-2.69 6-6c0-1.66-.67-3.16-1.76-4.24l-1.41 1.41C15.55 9.9 16 10.9 16 12c0 2.21-1.79 4-4 4s-4-1.79-4-4c0-1.86 1.28-3.41 3-3.86v2.14c-.6.35-1 .98-1 1.72 0 1.1.9 2 2 2s2-.9 2-2c0-.74-.4-1.38-1-1.72V2h-1C6.48 2 2 6.48 2 12s4.48 10 10 10 10-4.48 10-10c0-2.76-1.12-5.26-2.93-7.07z"/></svg>
<div class="t" style="left:31.9px;top:594px;font-size:9.6px;line-height:13px;height:13px;letter-spacing:-0.04px;color:#bcc7cd">Advertising</div>
<div class="a" style="left:10px;top:634px;width:147px;height:1px;background:#a8bcc4"></div>
<div class="t" style="left:10px;top:646px;font-size:10px;line-height:13px;height:13px;letter-spacing:-0.3px;transform:scaleX(0.914);transform-origin:0 50%;font-weight:bold;color:#fff">CONFIGURER</div>
<svg viewBox="0 0 24 24" style="left:9.8px;top:683.8px;width:15px;height:15px;fill:#fff"><path d="M19.43 12.98c.04-.32.07-.64.07-.98s-.03-.66-.07-.98l2.11-1.65c.19-.15.24-.42.12-.64l-2-3.46c-.12-.22-.39-.3-.61-.22l-2.49 1c-.52-.4-1.08-.73-1.69-.98l-.38-2.65C14.46 2.18 14.25 2 14 2h-4c-.25 0-.46.18-.49.42l-.38 2.65c-.61.25-1.17.59-1.69.98l-2.49-1c-.23-.09-.49 0-.61.22l-2 3.46c-.13.22-.07.49.12.64l2.11 1.65c-.04.32-.07.65-.07.98s.03.66.07.98l-2.11 1.65c-.19.15-.24.42-.12.64l2 3.46c.12.22.39.3.61.22l2.49-1c.52.4 1.08.73 1.69.98l.38 2.65c.03.24.24.42.49.42h4c.25 0 .46-.18.49-.42l.38-2.65c.61-.25 1.17-.59 1.69-.98l2.49 1c.23.09.49 0 .61-.22l2-3.46c.12-.22.07-.49-.12-.64l-2.11-1.65zM12 15.5c-1.93 0-3.5-1.57-3.5-3.5s1.57-3.5 3.5-3.5 3.5 1.57 3.5 3.5-1.57 3.5-3.5 3.5z"/></svg>
<div class="t" style="left:31.9px;top:673px;font-size:9.6px;line-height:13px;height:13px;letter-spacing:-0.13px;color:#bcc7cd">Paramètres de la</div>
<div class="t" style="left:31.9px;top:685px;font-size:9.6px;line-height:13px;height:13px;letter-spacing:0.14px;color:#bcc7cd">boutique</div>
<svg viewBox="0 0 24 24" style="left:9.8px;top:707.5px;width:15px;height:15px;fill:#fff"><path d="M12 10c-1.1 0-2 .9-2 2s.9 2 2 2 2-.9 2-2-.9-2-2-2zm7-7H5c-1.11 0-2 .9-2 2v14c0 1.1.89 2 2 2h14c1.11 0 2-.9 2-2V5c0-1.1-.89-2-2-2zm-1.75 9c0 .23-.02.46-.05.68l1.48 1.16c.13.11.17.3.08.45l-1.4 2.42c-.09.15-.27.21-.43.15l-1.74-.7c-.36.28-.76.51-1.18.69l-.26 1.85c-.03.17-.18.3-.35.3h-2.8c-.17 0-.32-.13-.35-.29l-.26-1.85c-.43-.18-.82-.41-1.18-.69l-1.74.7c-.16.06-.34 0-.43-.15l-1.4-2.42c-.09-.15-.05-.34.08-.45l1.48-1.16c-.03-.23-.05-.46-.05-.69 0-.23.02-.46.05-.68l-1.48-1.16c-.13-.11-.17-.3-.08-.45l1.4-2.42c.09-.15.27-.21.43-.15l1.74.7c.36-.28.76-.51 1.18-.69l.26-1.85c.03-.17.18-.3.35-.3h2.8c.17 0 .32.13.35.29l.26 1.85c.43.18.82.41 1.18.69l1.74-.7c.16-.06.34 0 .43.15l1.4 2.42c.09.15.05.34-.08.45l-1.48 1.16c.03.23.05.46.05.69z"/></svg>
<div class="t" style="left:31.9px;top:709px;font-size:9.6px;line-height:13px;height:13px;letter-spacing:-0.2px;color:#bcc7cd">Paramètres avancés</div>
</div>
</body>
</html>
